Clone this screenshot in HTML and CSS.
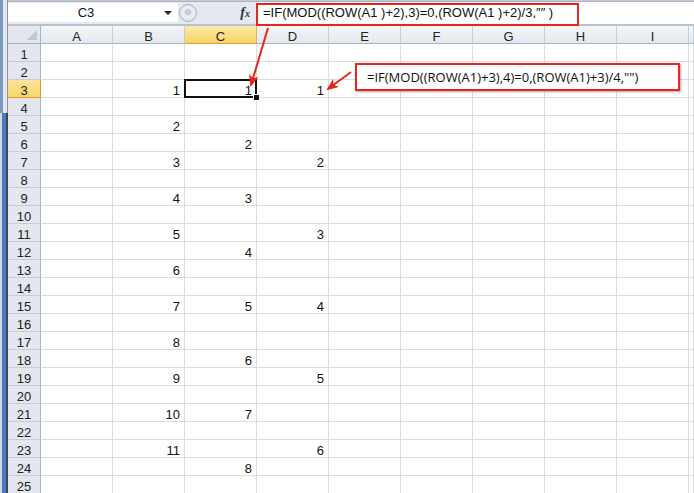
FILE: index.html
```html
<!DOCTYPE html>
<html lang="ja">
<head>
  <meta charset="UTF-8" />
  <title>Sheet1</title>
  <link rel="stylesheet" href="styles.css">
</head>
<body>
  <div class="window">
    <div class="frame">
      <div class="frame-top"></div>
      <div class="frame-bottom"></div>
    </div>
    <div class="main">
      <div class="ribbon-edge"></div>
      <div class="formula-bar">
        <div class="name-box">
          <span class="name-text">C3</span>
          <span class="name-drop"></span>
        </div>
        <div class="bar-tools">
          <span class="grip"></span>
          <span class="fx"><i>f</i><small>x</small></span>
        </div>
        <div class="formula-input">=IF(MOD((ROW(A1 )+2),3)=0,(ROW(A1 )+2)/3,&Prime;&Prime; )</div>
      </div>
      <div class="sheet" id="sheet"></div>
    </div>

    <!-- annotations -->
    <div class="note-frame"></div>
    <div class="note">=IF(MOD((ROW(A1)+3),4)=0,(ROW(A1)+3)/4,"")</div>
    <svg class="arrows" width="694" height="493">
      <defs>
        <marker id="head" markerWidth="12" markerHeight="10" refX="10" refY="5" orient="auto" markerUnits="userSpaceOnUse">
          <path d="M0,0 L12,5 L0,10 L3,5 Z" fill="#e8241c" />
        </marker>
      </defs>
      <line x1="268" y1="28" x2="251" y2="85" stroke="#e8241c" stroke-width="2" marker-end="url(#head)" />
      <line x1="351" y1="72" x2="328" y2="89" stroke="#e8241c" stroke-width="2" marker-end="url(#head)" />
    </svg>
  </div>

  <script>
    const sheet = document.getElementById('sheet');
    const letters = ['A', 'B', 'C', 'D', 'E', 'F', 'G', 'H', 'I', ''];

    function cell(cls, text) {
      const el = document.createElement('div');
      el.className = cls;
      if (text !== undefined) el.textContent = text;
      sheet.appendChild(el);
      return el;
    }

    cell('corner');
    letters.forEach(l => cell('col-head' + (l === 'C' ? ' active' : ''), l));

    for (let r = 1; r <= 25; r++) {
      cell('row-head' + (r === 3 ? ' active' : ''), r);
      letters.forEach(l => {
        let v = '';
        if (l === 'B' && r % 2 === 1 && r > 1 && r < 25) v = (r - 1) / 2;
        if (l === 'C' && r % 3 === 0) v = r / 3;
        if (l === 'D' && (r + 1) % 4 === 0) v = (r + 1) / 4;
        const c = cell('cell', v);
        if (l === 'C' && r === 3) c.classList.add('selected');
      });
    }
  </script>
</body>
</html>
```

FILE: styles.css
```css
body {
  margin: 0;
  font-family: 'Liberation Sans', Arial, sans-serif;
  background-color: #fff;
  overflow: hidden;
}

.window {
  position: relative;
  display: flex;
  width: 694px;
  height: 493px;
  overflow: hidden;
}

.frame {
  width: 8px;
  display: flex;
  flex-direction: column;
}

.frame-top {
  height: 113px;
  background: linear-gradient(to right, #7d98c4 0 3px, #e3e8ef 3px 7px, #8a94a2 7px 8px);
}

.frame-bottom {
  flex-grow: 1;
  background: linear-gradient(to right, #d3d9e1 0 2px, #4b7bc3 2px 6px, #3d4654 6px 8px);
}

.main {
  flex-grow: 1;
  display: flex;
  flex-direction: column;
  min-width: 0;
}

.ribbon-edge {
  height: 5px;
  background-color: #dfe4eb;
  border-top: 1px solid #c3cbd6;
  border-bottom: 1px solid #aab4c2;
  box-sizing: border-box;
}

.formula-bar {
  height: 24px;
  display: flex;
  background-color: #e6eaf0;
  border-bottom: 2px solid #b9c2ce;
  box-sizing: border-box;
}

.name-box {
  width: 170px;
  margin: 1px 0 2px 0;
  background-color: #fff;
  display: flex;
  align-items: center;
}

.name-text {
  flex-grow: 1;
  text-align: center;
  font-size: 13px;
  color: #111;
}

.name-drop {
  width: 0;
  height: 0;
  border-left: 4px solid transparent;
  border-right: 4px solid transparent;
  border-top: 4px solid #222;
  margin-right: 6px;
}

.bar-tools {
  width: 78px;
  display: flex;
  align-items: center;
  justify-content: space-between;
  padding-right: 6px;
  box-sizing: border-box;
}

.grip {
  width: 18px;
  height: 18px;
  margin-left: 1px;
  border-radius: 50%;
  border: 1px solid #a9b1bc;
  background: radial-gradient(circle at 50% 45%, #c9ced5 0 3px, #eef0f3 4px, #dfe3e8 9px);
  box-sizing: border-box;
}

.fx {
  font-family: 'Liberation Serif', serif;
  font-weight: bold;
  font-size: 14px;
  color: #333;
}

.fx small {
  font-size: 10px;
  font-style: italic;
}

.formula-input {
  flex-grow: 1;
  background-color: #fff;
  font-size: 13px;
  line-height: 22px;
  padding-left: 7px;
  color: #111;
  white-space: nowrap;
}

.sheet {
  display: grid;
  grid-template-columns: 33px repeat(9, 72px) 1fr;
  grid-auto-rows: 18px;
  font-size: 13px;
  color: #111;
}

.corner,
.col-head,
.row-head,
.cell {
  box-sizing: border-box;
  display: flex;
  align-items: flex-end;
  line-height: 1;
}

.corner {
  background-color: #e4e8ee;
  border-right: 1px solid #9eb6ce;
  border-bottom: 1px solid #9eb6ce;
  position: relative;
}

.corner::after {
  content: '';
  position: absolute;
  right: 3px;
  bottom: 3px;
  border-left: 10px solid transparent;
  border-bottom: 10px solid #c2c7cf;
}

.col-head {
  justify-content: center;
  background: linear-gradient(#f4f6f8, #e4e8ed);
  border-right: 1px solid #c6ced9;
  border-bottom: 1px solid #9eb6ce;
  color: #222;
}

.col-head.active {
  background: linear-gradient(#fde9a6, #f8d46a);
  border-right-color: #e9b24e;
  border-bottom: 1px solid #e29a2b;
}

.row-head {
  justify-content: center;
  background-color: #e4e8ee;
  border-right: 1px solid #9eb6ce;
  border-bottom: 1px solid #c6ccd5;
  color: #222;
}

.row-head.active {
  background: linear-gradient(#fde49a, #f9d66c);
  border-right-color: #e29a2b;
  border-bottom: 1px solid #e29a2b;
}

.cell {
  justify-content: flex-end;
  padding-right: 4px;
  border-right: 1px solid #dadcdd;
  border-bottom: 1px solid #dadcdd;
}

.cell.selected {
  position: relative;
}

.cell.selected::after {
  content: '';
  position: absolute;
  inset: -1px -1px -1px -1px;
  border: 2px solid #111;
}

.cell.selected::before {
  content: '';
  position: absolute;
  right: -4px;
  bottom: -4px;
  width: 5px;
  height: 5px;
  background-color: #111;
  border: 1px solid #fff;
  z-index: 1;
}

.note-frame {
  position: absolute;
  left: 256px;
  top: 3px;
  width: 323px;
  height: 23px;
  border: 2px solid #e8241c;
  box-sizing: border-box;
}

.note {
  position: absolute;
  left: 355px;
  top: 63px;
  width: 325px;
  height: 28px;
  border: 2px solid #e8241c;
  box-sizing: border-box;
  background-color: #fff;
  box-shadow: 1px 1px 2px rgba(0, 0, 0, 0.35);
  font-family: 'Open Sans', sans-serif;
  font-size: 13px;
  line-height: 24px;
  padding-left: 10px;
  color: #111;
  white-space: nowrap;
}

.arrows {
  position: absolute;
  left: 0;
  top: 0;
  pointer-events: none;
}
```
